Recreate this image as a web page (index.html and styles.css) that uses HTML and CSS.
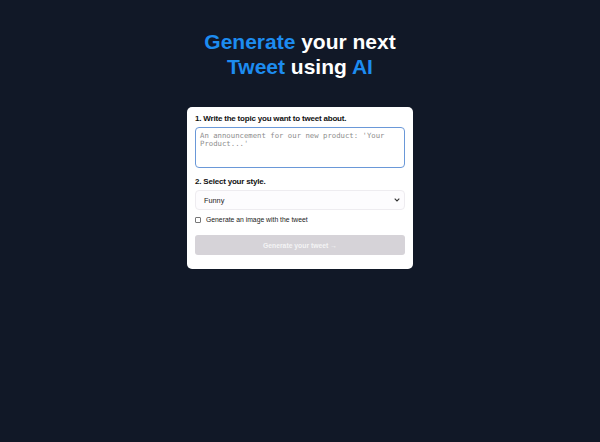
FILE: index.html
```html
<!DOCTYPE html>
<html>
<head>
<meta charset="utf-8">
<link rel="stylesheet" href="styles.css">
</head>
<body>
<main class="page">
  <h1 class="title"><span class="blue">Generate</span> your next<br><span class="blue">Tweet</span> using <span class="blue">AI</span></h1>
  <form class="card">
    <label class="label" for="topic">1. Write the topic you want to tweet about.</label>
    <textarea id="topic" class="topic" placeholder="An announcement for our new product: 'Your Product...'"></textarea>
    <label class="label label2" for="style">2. Select your style.</label>
    <div class="select">
      <span>Funny</span>
      <svg width="6" height="4" viewBox="0 0 6 4"><path d="M0.7 0.7 L3 3 L5.3 0.7" fill="none" stroke="#333" stroke-width="1.1"/></svg>
    </div>
    <label class="check"><span class="box"></span>Generate an image with the tweet</label>
    <button type="button" class="btn">Generate your tweet →</button>
  </form>
</main>
</body>
</html>
```

FILE: styles.css
```css
* { box-sizing: border-box; }
html, body { margin: 0; padding: 0; }
body {
  background: #111827;
  width: 600px;
  height: 442px;
  font-family: "Liberation Sans", Arial, sans-serif;
}
.page {
  display: flex;
  flex-direction: column;
  align-items: center;
  padding-top: 29px;
}
.title {
  margin: 0;
  color: #fff;
  font-size: 21px;
  line-height: 25px;
  font-weight: bold;
  text-align: center;
}
.blue { color: #1d8cf0; }
.card {
  margin-top: 28px;
  width: 226px;
  background: #fff;
  border-radius: 5px;
  padding: 6px 8px 14px;
  display: flex;
  flex-direction: column;
}
.label {
  font-size: 8px;
  letter-spacing: -0.2px;
  font-weight: bold;
  color: #111;
  line-height: 11px;
}
.topic {
  margin-top: 3px;
  height: 41px;
  width: 100%;
  border: 1.5px solid #6a98d8;
  border-radius: 4px;
  resize: none;
  padding: 4px 4px;
  font-family: "DejaVu Sans Mono", monospace;
  font-size: 7.3px;
  line-height: 8px;
  background: #fff;
}
.topic::placeholder { color: #8e8e8e; }
.label2 { margin-top: 8px; }
.select {
  margin-top: 3px;
  height: 20px;
  border: 1px solid #eeecf0;
  border-radius: 4px;
  background: #fdfcfe;
  display: flex;
  align-items: center;
  justify-content: space-between;
  padding: 0 4px 0 8px;
  font-size: 7.3px;
  color: #222;
}
.check {
  margin-top: 5px;
  display: flex;
  align-items: center;
  gap: 5px;
  font-size: 6.8px;
  color: #222;
  line-height: 10px;
}
.box {
  width: 6px;
  height: 6px;
  border: 0.8px solid #777;
  border-radius: 1px;
}
.btn {
  margin-top: 10px;
  height: 20px;
  border: none;
  border-radius: 3px;
  background: #d6d3d8;
  color: #f4f3f5;
  font-family: "Liberation Sans", Arial, sans-serif;
  font-size: 6.8px;
  font-weight: bold;
}
```
